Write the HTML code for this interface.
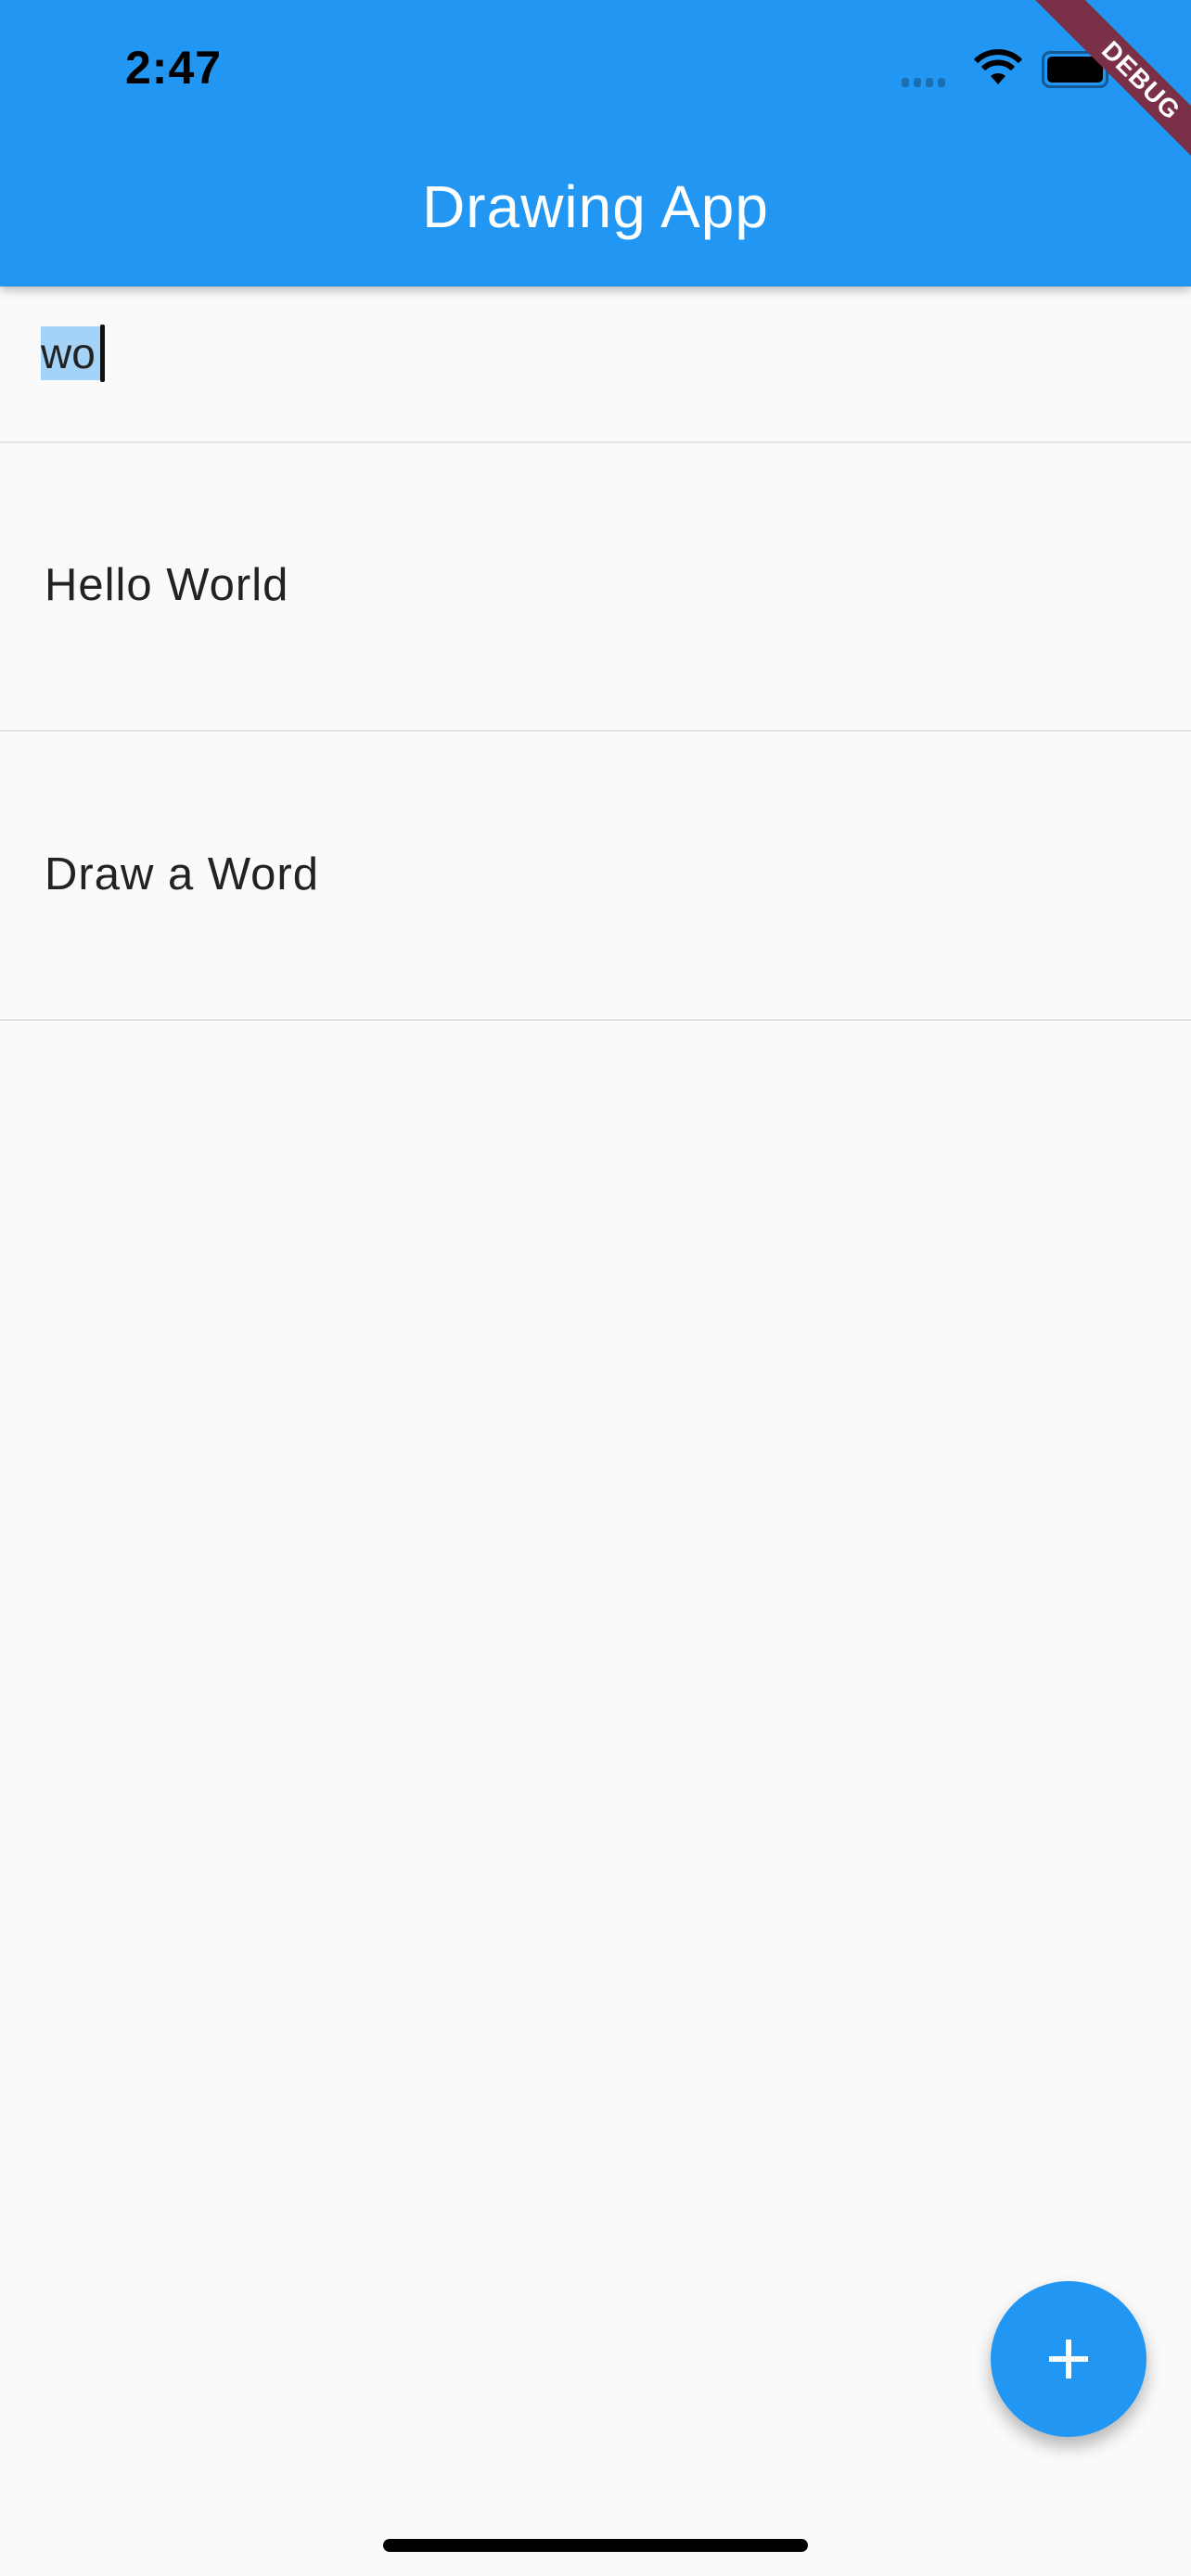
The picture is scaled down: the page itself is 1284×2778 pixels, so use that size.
<!DOCTYPE html>
<html><head><meta charset="utf-8"><style>
html,body{margin:0;padding:0;}
body{width:1284px;height:2778px;background:#fafafa;position:relative;overflow:hidden;font-family:"Liberation Sans",sans-serif;}
.bar{position:absolute;left:0;top:0;width:1284px;height:309px;background:#2196f3;box-shadow:0 4px 10px rgba(0,0,0,0.25);z-index:2;}
.time{position:absolute;left:135px;top:44px;font-size:50px;font-weight:bold;color:#000;letter-spacing:1px;}
.title{position:absolute;left:0;width:1284px;top:186px;text-align:center;color:#fff;font-size:64px;letter-spacing:1px;}
.row{position:absolute;left:48px;font-size:49px;color:#222;letter-spacing:1px;}
.div{position:absolute;left:0;width:1284px;height:2px;background:#e2e2e2;}
.fab{position:absolute;left:1068px;top:2460px;width:168px;height:168px;border-radius:50%;background:#2196f3;box-shadow:0 10px 18px rgba(0,0,0,0.28);}
.banner{position:absolute;width:320px;height:38px;background:#7a3046;color:#fff;font-weight:bold;font-size:28px;text-align:center;line-height:38px;transform:rotate(45deg);left:1070px;top:68px;z-index:5;letter-spacing:1px;}
</style></head><body>
<div class="bar">
<div class="time">2:47</div>
<div style="position:absolute;left:972px;top:81px;">
<span style="display:inline-block;width:8px;height:10px;background:#1a6fb3;border-radius:3px;margin-right:5px"></span><span style="display:inline-block;width:8px;height:10px;background:#1a6fb3;border-radius:3px;margin-right:5px"></span><span style="display:inline-block;width:8px;height:10px;background:#1a6fb3;border-radius:3px;margin-right:5px"></span><span style="display:inline-block;width:8px;height:10px;background:#1a6fb3;border-radius:3px"></span></div>
<svg style="position:absolute;left:1050px;top:52px" width="52" height="40" viewBox="0 0 52 40"><path d="M2 14 A34 34 0 0 1 50 14" stroke="#000" stroke-width="6" fill="none"/><path d="M10 22 A23 23 0 0 1 42 22" stroke="#000" stroke-width="6" fill="none"/><path d="M18 30 L26 39 L34 30 A12 12 0 0 0 18 30Z" fill="#000"/></svg>
<div style="position:absolute;left:1123px;top:55px;width:66px;height:34px;border:3px solid #135a94;border-radius:9px;"><div style="margin:3px;height:28px;background:#000;border-radius:5px;"></div></div>
<div class="title">Drawing App</div>
</div>
<div class="banner">DEBUG</div>
<div style="position:absolute;left:44px;top:352px;width:64px;height:58px;background:#a5d3f7;"></div>
<div class="row" style="left:44px;top:354px;font-size:46px;color:#222;letter-spacing:0">wo</div>
<div style="position:absolute;left:108px;top:350px;width:5px;height:62px;background:#111;border-radius:2px"></div>
<div class="div" style="top:476px"></div>
<div class="row" style="top:603px">Hello World</div>
<div class="div" style="top:787px"></div>
<div class="row" style="top:915px">Draw a Word</div>
<div class="div" style="top:1099px"></div>
<div class="fab"><div style="position:absolute;left:63px;top:81px;width:42px;height:6px;background:#fff"></div><div style="position:absolute;left:81px;top:63px;width:6px;height:42px;background:#fff"></div></div>
<div style="position:absolute;left:413px;top:2738px;width:458px;height:14px;background:#000;border-radius:7px"></div>
</body></html>
